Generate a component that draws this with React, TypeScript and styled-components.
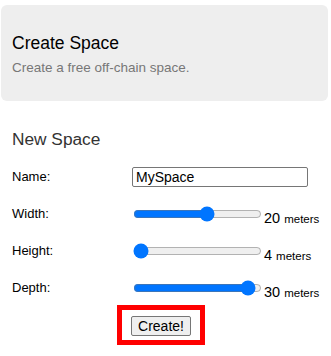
import React, { useState } from "react";
import styled, { createGlobalStyle } from "styled-components";

const GlobalStyle = createGlobalStyle`
  body {
    margin: 0;
    background: #fff;
    font-family: "Liberation Sans", Arial, sans-serif;
    color: #000;
  }
`;

const Page = styled.div`
  padding: 5px 3px 0 1px;
`;

const Jumbotron = styled.div`
  height: 96px;
  box-sizing: border-box;
  padding: 27px 11px 0;
  background-color: #eeeeee;
  border-radius: 6px;
`;

const Title = styled.h1`
  margin: 0;
  font-size: 17.5px;
  font-weight: normal;
  line-height: 22px;
  color: #000;
`;

const Subtitle = styled.p`
  margin: 5px 0 0;
  font-size: 13.5px;
  line-height: 18px;
  color: #777;
`;

const Section = styled.div`
  padding: 0 11px;
  width: 298px;
`;

const SectionTitle = styled.h2`
  margin: 27px 0 0;
  font-size: 17.3px;
  font-weight: normal;
  line-height: 22px;
  color: #333;
`;

const Form = styled.div`
  margin-top: 8px;
  display: grid;
  grid-template-columns: 119px 1fr;
  grid-auto-rows: 37px;
  align-items: center;
`;

const Label = styled.label`
  font-size: 13px;
  line-height: 16px;
`;

const Field = styled.div`
  display: flex;
  align-items: center;
`;

const TextInput = styled.input`
  width: 176px;
  height: 20px;
  box-sizing: border-box;
  margin: 0 0 0 1px;
  padding: 1px 3px;
  border: 1px solid #767676;
  border-radius: 2px;
  font-family: "Liberation Sans", Arial, sans-serif;
  font-size: 14px;
  color: #000;
`;

const Range = styled.input`
  width: 129px;
  height: 16px;
  margin: 2px;
  accent-color: #0075ff;
`;

const Value = styled.span`
  margin-left: 0;
  padding-top: 8px;
  font-size: 14.5px;
  white-space: nowrap;

  small {
    font-size: 11.5px;
  }
`;

const Footer = styled.div`
  display: flex;
  justify-content: center;
  margin-top: -1px;
`;

const Highlight = styled.div`
  border: 5px solid #ff0000;
  padding: 6px 9px 4px;
`;

const Button = styled.button`
  height: 20px;
  padding: 1px 6px;
  font-family: "Liberation Sans", Arial, sans-serif;
  font-size: 14px;
  color: #000;
  background: #efefef;
  border: 1px solid #767676;
  border-radius: 2px;
`;

type Slider = { key: string; label: string; value: number };

export default function App() {
  const [name, setName] = useState("MySpace");
  const [dims, setDims] = useState<Slider[]>([
    { key: "width", label: "Width:", value: 20 },
    { key: "height", label: "Height:", value: 4 },
    { key: "depth", label: "Depth:", value: 30 },
  ]);

  const update = (key: string, value: number) =>
    setDims(dims.map((d) => (d.key === key ? { ...d, value } : d)));

  return (
    <Page>
      <GlobalStyle />
      <Jumbotron>
        <Title>Create Space</Title>
        <Subtitle>Create a free off-chain space.</Subtitle>
      </Jumbotron>
      <Section>
        <SectionTitle>New Space</SectionTitle>
        <Form>
          <Label>Name:</Label>
          <Field>
            <TextInput value={name} onChange={(e) => setName(e.target.value)} />
          </Field>
          {dims.map((d) => (
            <React.Fragment key={d.key}>
              <Label>{d.label}</Label>
              <Field>
                <Range
                  type="range"
                  min={4}
                  max={31.5}
                  step={0.5}
                  value={d.value}
                  onChange={(e) => update(d.key, Math.round(Number(e.target.value)))}
                />
                <Value>
                  {d.value} <small>meters</small>
                </Value>
              </Field>
            </React.Fragment>
          ))}
        </Form>
        <Footer>
          <Highlight>
            <Button>Create!</Button>
          </Highlight>
        </Footer>
      </Section>
    </Page>
  );
}
